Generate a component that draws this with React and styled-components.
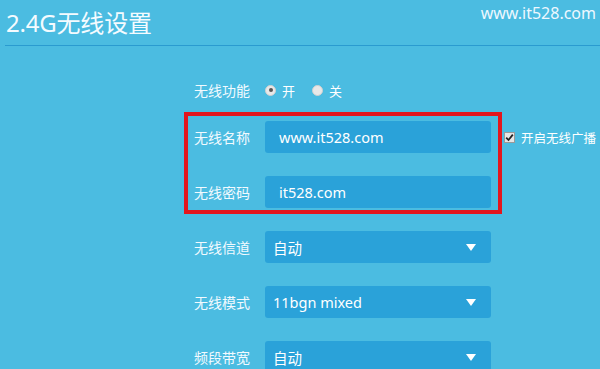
import React from "react";
import styled, { createGlobalStyle } from "styled-components";

const GlobalStyle = createGlobalStyle`
  html, body {
    margin: 0;
    padding: 0;
    background: #4bbce1;
    overflow: hidden;
  }
  body {
    font-family: "Noto Sans", "Noto Sans CJK SC", sans-serif;
    color: #fff;
  }
`;

const Page = styled.div`
  width: 600px;
  height: 369px;
  background: #4bbce1;
  overflow: hidden;
`;

const Header = styled.div`
  display: flex;
  justify-content: space-between;
  align-items: flex-start;
  height: 45px;
  margin-left: 5px;
  border-bottom: 1px solid #2a9bd0;
`;

const Title = styled.h1`
  margin: 0;
  padding-left: 1px;
  font-size: 24px;
  font-weight: 400;
  line-height: 45px;
  letter-spacing: -0.2px;
  color: #f4fbff;
`;

const Watermark = styled.div`
  padding: 3px 4px 0 0;
  font-size: 16px;
  line-height: 20px;
  color: #eef8ff;
`;

const Form = styled.div`
  display: flex;
  flex-direction: column;
  padding-left: 184px;
`;

const Row = styled.div`
  display: flex;
  align-items: center;
  height: 32px;
  margin-top: ${(p) => p.$top}px;
  padding-left: ${(p) => (p.$inset ? 0 : 10)}px;
`;

const Label = styled.div`
  width: 71px;
  flex-shrink: 0;
  font-size: 14px;
  color: #f2faff;
`;

const Highlight = styled.div`
  box-sizing: border-box;
  width: 318px;
  margin-top: ${(p) => p.$top}px;
  padding: 5px 6px 2px 6px;
  border: 4px solid #e3161d;
`;

const Field = styled.div`
  box-sizing: border-box;
  display: flex;
  align-items: center;
  justify-content: space-between;
  width: 226px;
  height: 32px;
  flex-shrink: 0;
  padding: 0 15px 0 ${(p) => (p.$select ? 8 : 14)}px;
  border-radius: 3px;
  background: #2aa2d9;
  font-size: 14.5px;
  color: #fff;
`;

const Arrow = styled.span`
  width: 0;
  height: 0;
  border-left: 5px solid transparent;
  border-right: 5px solid transparent;
  border-top: 7px solid #fff;
`;

const Choice = styled.label`
  display: flex;
  align-items: center;
  gap: 6px;
  margin-right: 17px;
  font-size: 13px;
  color: #fff;
`;

const Radio = styled.span`
  position: relative;
  box-sizing: border-box;
  width: 11px;
  height: 11px;
  border-radius: 50%;
  background: #e8e8e8;
  border: 1px solid #d0d0d0;

  &::after {
    content: "";
    position: absolute;
    left: 2.5px;
    top: 2.5px;
    width: 4px;
    height: 4px;
    border-radius: 50%;
    background: ${(p) => (p.$on ? "#555" : "transparent")};
  }
`;

const Broadcast = styled.label`
  display: flex;
  align-items: center;
  gap: 6px;
  margin-left: 13px;
  flex-shrink: 0;
  font-size: 12.5px;
  white-space: nowrap;
  color: #fff;
`;

const Check = styled.span`
  display: flex;
  align-items: center;
  justify-content: center;
  box-sizing: border-box;
  width: 11px;
  height: 11px;
  background: #e6e6e6;
  border: 1px solid #9a9a9a;
`;

const CheckMark = () => (
  <svg width="9" height="9" viewBox="0 0 9 9">
    <path d="M1.2 4.6 L3.5 7 L7.8 1.6" fill="none" stroke="#222" strokeWidth="1.8" />
  </svg>
);

const App = () => (
  <Page>
    <GlobalStyle />
    <Header>
      <Title>2.4G无线设置</Title>
      <Watermark>www.it528.com</Watermark>
    </Header>
    <Form>
      <Row $top={28}>
        <Label>无线功能</Label>
        <Choice>
          <Radio $on />开
        </Choice>
        <Choice>
          <Radio />关
        </Choice>
      </Row>
      <Highlight $top={6}>
        <Row $inset $top={0}>
          <Label>无线名称</Label>
          <Field>www.it528.com</Field>
          <Broadcast>
            <Check>
              <CheckMark />
            </Check>
            开启无线广播
          </Broadcast>
        </Row>
        <Row $inset $top={23}>
          <Label>无线密码</Label>
          <Field>it528.com</Field>
        </Row>
      </Highlight>
      <Row $top={17}>
        <Label>无线信道</Label>
        <Field $select>
          自动
          <Arrow />
        </Field>
      </Row>
      <Row $top={23}>
        <Label>无线模式</Label>
        <Field $select>
          11bgn mixed
          <Arrow />
        </Field>
      </Row>
      <Row $top={23}>
        <Label>频段带宽</Label>
        <Field $select>
          自动
          <Arrow />
        </Field>
      </Row>
    </Form>
  </Page>
);

export default App;
